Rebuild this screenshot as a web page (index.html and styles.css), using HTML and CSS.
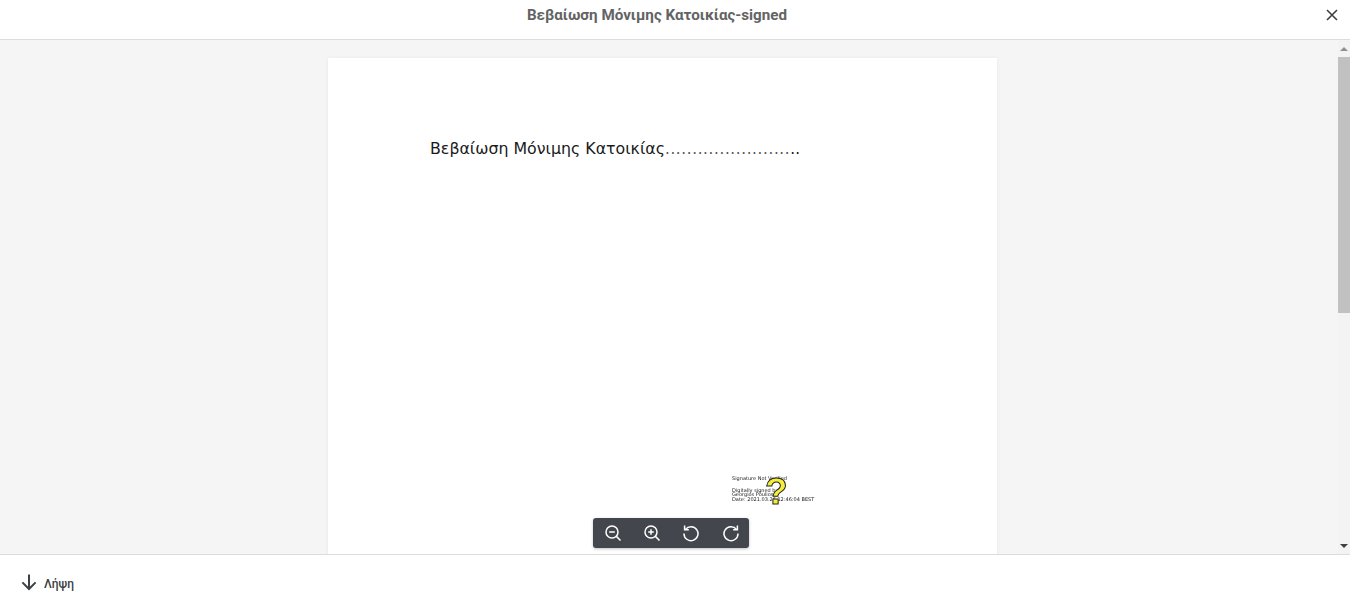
FILE: index.html
```html
<!DOCTYPE html>
<html lang="el">
<head>
<meta charset="UTF-8">
<title>Βεβαίωση Μόνιμης Κατοικίας-signed</title>
<link rel="stylesheet" href="styles.css">
</head>
<body>

<header class="topbar">
  <h1 class="doc-title">Βεβαίωση Μόνιμης Κατοικίας-signed</h1>
  <button class="close-btn" aria-label="Κλείσιμο">
    <svg width="14" height="14" viewBox="0 0 14 14"><path d="M2 2l10 10M12 2L2 12" stroke="#3c4043" stroke-width="1.6" fill="none"/></svg>
  </button>
</header>

<main class="viewer">
  <div class="viewer-scroll">
    <div class="page">
      <p class="page-line">Βεβαίωση Μόνιμης Κατοικίας<span class="dots">.......................</span><span class="dots-end">..</span></p>
      <div class="signature">
        <span class="sig-mark">?</span>
        <div class="sig-line sig-first">Signature Not Verified</div>
        <div class="sig-line sig-gap">Digitally signed by</div>
        <div class="sig-line sig-tight">Georgios Poulios</div>
        <div class="sig-line sig-date">Date: 2021.03.26 12:46:04 BEST</div>
      </div>
    </div>
  </div>

  <div class="scrollbar">
    <div class="scroll-arrow"><svg width="8" height="4" viewBox="0 0 8 4"><path d="M4 0l4 4H0z" fill="#8f8f8f"/></svg></div>
    <div class="scroll-thumb"></div>
    <div class="scroll-track"></div>
    <div class="scroll-arrow"><svg width="8" height="4" viewBox="0 0 8 4"><path d="M0 0h8L4 4z" fill="#3f3f3f"/></svg></div>
  </div>

  <div class="zoom-tools">
    <button class="tool-btn" aria-label="Σμίκρυνση">
      <svg width="18" height="18" viewBox="0 0 18 18"><circle cx="8" cy="8" r="6" /><path d="M5.2 8h5.6M12.4 12.4L16.5 16.5" /></svg>
    </button>
    <button class="tool-btn" aria-label="Μεγέθυνση">
      <svg width="18" height="18" viewBox="0 0 18 18"><circle cx="8" cy="8" r="6" /><path d="M5.2 8h5.6M8 5.2v5.6M12.4 12.4L16.5 16.5" /></svg>
    </button>
    <button class="tool-btn" aria-label="Αριστερή περιστροφή">
      <svg width="18" height="18" viewBox="0 0 18 18"><path d="M3.6 5.2A7 7 0 1 1 2 9.6" /><path d="M2.6 1.6v4.2h4.2" /></svg>
    </button>
    <button class="tool-btn tool-last" aria-label="Δεξιά περιστροφή">
      <svg width="18" height="18" viewBox="0 0 18 18"><path d="M14.4 5.2A7 7 0 1 0 16 9.6" /><path d="M15.4 1.6v4.2h-4.2" /></svg>
    </button>
  </div>
</main>

<footer class="bottombar">
  <a class="download" href="#">
    <svg class="download-icon" width="18" height="18" viewBox="0 0 18 18"><path d="M9 1.5v14.5M2.4 9.4L9 16l6.6-6.6" stroke="#3c4043" stroke-width="2" fill="none"/></svg>
    <span>Λήψη</span>
  </a>
</footer>

</body>
</html>
```

FILE: styles.css
```css
html, body {
  height: 100%;
}
body {
  margin: 0;
  display: flex;
  flex-direction: column;
  overflow: hidden;
  background-color: white;
  font-family: Roboto, "Noto Sans", sans-serif;
}
button {
  border: 0;
  padding: 0;
  background: none;
  cursor: pointer;
}

.topbar {
  flex: none;
  height: 39px;
  display: flex;
  align-items: center;
  justify-content: center;
  padding-right: 36px;
  position: relative;
  border-bottom: 1px solid #dcdcdc;
}
.doc-title {
  margin: 0 0 9px 0;
  font-size: 15.2px;
  font-weight: 700;
  color: #636363;
}
.close-btn {
  position: absolute;
  top: 8px;
  right: 11px;
  width: 14px;
  height: 14px;
}

.viewer {
  flex: 1;
  min-height: 0;
  display: flex;
  position: relative;
  background-color: #f5f5f5;
}
.viewer-scroll {
  flex: 1;
  min-width: 0;
  overflow: hidden;
  padding: 18px 13px 0 0;
  display: flex;
  justify-content: center;
}
.page {
  flex: none;
  width: 669px;
  height: 946px;
  position: relative;
  background-color: white;
  box-shadow: 0 0 4px rgba(0,0,0,.05);
}
.page-line {
  margin: 0;
  padding: 82px 0 0 102px;
  font-family: "DejaVu Sans", sans-serif;
  font-size: 15.8px;
  line-height: 18px;
  color: #1a1a1a;
}
.dots {
  font-size: 15px;
  letter-spacing: 0.68px;
  color: #555;
}
.dots-end {
  font-size: 15px;
  letter-spacing: 0.3px;
  color: #111;
}
/* signature stamp sits over the page */
.signature {
  position: absolute;
  top: 418px;
  left: 404px;
  width: 90px;
  font-family: "DejaVu Sans", sans-serif;
  font-size: 5px;
  color: #222;
  filter: blur(.3px);
}
.sig-line {
  line-height: 5px;
  white-space: nowrap;
  position: relative;
}
.sig-gap {
  margin-top: 7px;
}
.sig-tight {
  margin-top: -1px;
}
.sig-date {
  margin-top: 0;
}
.sig-mark {
  position: absolute;
  top: -3px;
  left: 33px;
  font-family: "Liberation Sans", sans-serif;
  font-size: 37px;
  font-weight: 700;
  line-height: 37px;
  color: #f6ee3a;
  -webkit-text-stroke: 1px #222;
  z-index: 1;
}

.scrollbar {
  flex: none;
  width: 12px;
  display: flex;
  flex-direction: column;
  background-color: #f3f3f3;
}
.scroll-arrow {
  flex: none;
  height: 17px;
  display: flex;
  align-items: center;
  justify-content: center;
}
.scroll-thumb {
  flex: none;
  height: 256px;
  background-color: #c1c1c1;
}
.scroll-track {
  flex: 1;
}

.zoom-tools {
  position: absolute;
  top: 478px;
  left: 593px;
  width: 156px;
  height: 30px;
  padding: 0 0 0 2px;
  box-sizing: border-box;
  display: flex;
  align-items: center;
  gap: 3px;
  border-radius: 3px;
  background-color: #43474d;
  box-shadow: 0 1px 3px rgba(0,0,0,.25);
}
.tool-btn {
  flex: none;
  width: 36px;
  height: 30px;
  display: flex;
  align-items: center;
  justify-content: center;
}
.tool-last {
  margin-left: 1px;
}
.tool-btn svg {
  fill: none;
  stroke: white;
  stroke-width: 1.5;
}

.bottombar {
  flex: none;
  height: 53px;
  box-sizing: border-box;
  display: flex;
  align-items: center;
  padding: 5px 0 0 20px;
  border-top: 1px solid #dcdcdc;
  background-color: white;
}
.download {
  display: flex;
  align-items: center;
  gap: 6px;
  font-size: 12px;
  font-weight: 500;
  color: #3c4043;
  text-decoration: none;
}
.download-icon {
  margin-top: -3px;
}
```
